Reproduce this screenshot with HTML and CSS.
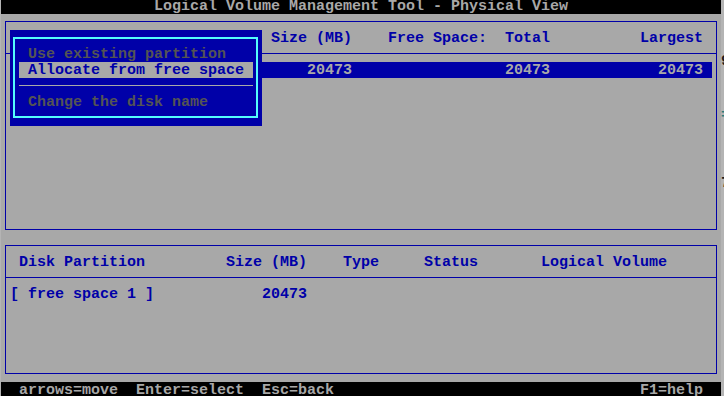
FILE: index.html
```html
<!DOCTYPE html>
<html lang="en">
<head>
    <meta charset="UTF-8">
    <title>Logical Volume Management Tool - Physical View</title>
    <link rel="stylesheet" href="styles.css">
</head>
<body>
    <div class="screen">
        <div class="titlebar">Logical Volume Management Tool - Physical View</div>
        <div class="desk">
            <div class="panel disks">
                <div class="line head">                             Size (MB)    Free Space:  Total          Largest</div>
                <div class="rule"></div>
                <div class="line sel">                                 20473                 20473            20473 </div>
            </div>
            <div class="panel parts">
                <div class="line head"> Disk Partition         Size (MB)    Type     Status       Logical Volume</div>
                <div class="rule"></div>
                <div class="line">[ free space 1 ]            20473</div>
            </div>
            <div class="menu">
                <div class="frame">
                    <div class="item dim">Use existing partition</div>
                    <div class="item on">Allocate from free space</div>
                    <div class="sep"></div>
                    <div class="item dim">Change the disk name</div>
                </div>
            </div>
        </div>
        <div class="statusbar">
            <span>arrows=move  Enter=select  Esc=back</span>
            <span>F1=help</span>
        </div>
    </div>
    <div class="behind">
        <div class="frag g9">9</div>
        <div class="frag geq">=</div>
        <div class="frag g7">7</div>
    </div>
</body>
</html>
```

FILE: styles.css
```css
body {
    margin: 0;
    padding: 0;
    background-color: #b4b4b4;
    height: 396px;
    overflow: hidden;
    position: relative;
    font-family: "Liberation Mono", "DejaVu Sans Mono", monospace;
    font-size: 15px;
    font-weight: bold;
}
.screen {
    width: 720px;
    height: 400px;
    margin-top: -2px;
    margin-left: 1px;
    background-color: #a8a8a8;
    overflow: hidden;
}
/* rows are 16px cells; line-height 18 drops the glyphs 1px like the vga font */
.titlebar {
    height: 16px;
    line-height: 18px;
    background-color: #000;
    color: #a8a8a8;
    text-align: center;
    white-space: pre;
}
.desk {
    height: 368px;
    position: relative;
    box-sizing: border-box;
    padding: 7px 0 0 4px;
}
.panel {
    width: 712px;
    box-sizing: border-box;
    border: 1px solid #0000a8;
    padding-top: 8px;
}
.disks { height: 209px; }
.parts { height: 129px; margin-top: 15px; }
.line {
    height: 16px;
    line-height: 18px;
    padding-left: 4px;
    white-space: pre;
    color: #0000a8;
}
.line.sel {
    padding-left: 0;
    margin-left: 4px;
    width: 702px;
    background-color: #0000a8;
    color: #a8a8a8;
}
.rule {
    margin: 7px 0 8px;
    border-top: 1px solid #0000a8;
}
.menu {
    position: absolute;
    left: 9px;
    top: 16px;
    width: 252px;
    height: 96px;
    box-sizing: border-box;
    padding: 7px 4px 8px 3px;
    background-color: #0000a8;
}
.frame {
    height: 100%;
    box-sizing: border-box;
    border: 2px solid #54fcfc;
    padding: 7px 0 0 4px;
}
.item {
    width: 234px;
    height: 16px;
    line-height: 18px;
    box-sizing: border-box;
    padding-left: 9px;
    white-space: pre;
}
.item.dim { color: #545454; }
.item.on {
    background-color: #a8a8a8;
    color: #0000a8;
}
.sep {
    width: 234px;
    margin: 7px 0 8px;
    border-top: 1px solid #a8a8a8;
}
.statusbar {
    height: 16px;
    line-height: 18px;
    padding: 0 18px;
    background-color: #000;
    color: #a8a8a8;
    display: flex;
    justify-content: space-between;
    white-space: pre;
}
.behind {
    position: absolute;
    left: 721px;
    top: 0;
    width: 3px;
    height: 396px;
    overflow: hidden;
}
.frag {
    position: absolute;
    left: 0;
    line-height: 16px;
    color: #1a1a1a;
}
.g9 { top: 54px; }
.geq { top: 108px; color: #2a7a7a; }
.g7 { top: 176px; }
```
